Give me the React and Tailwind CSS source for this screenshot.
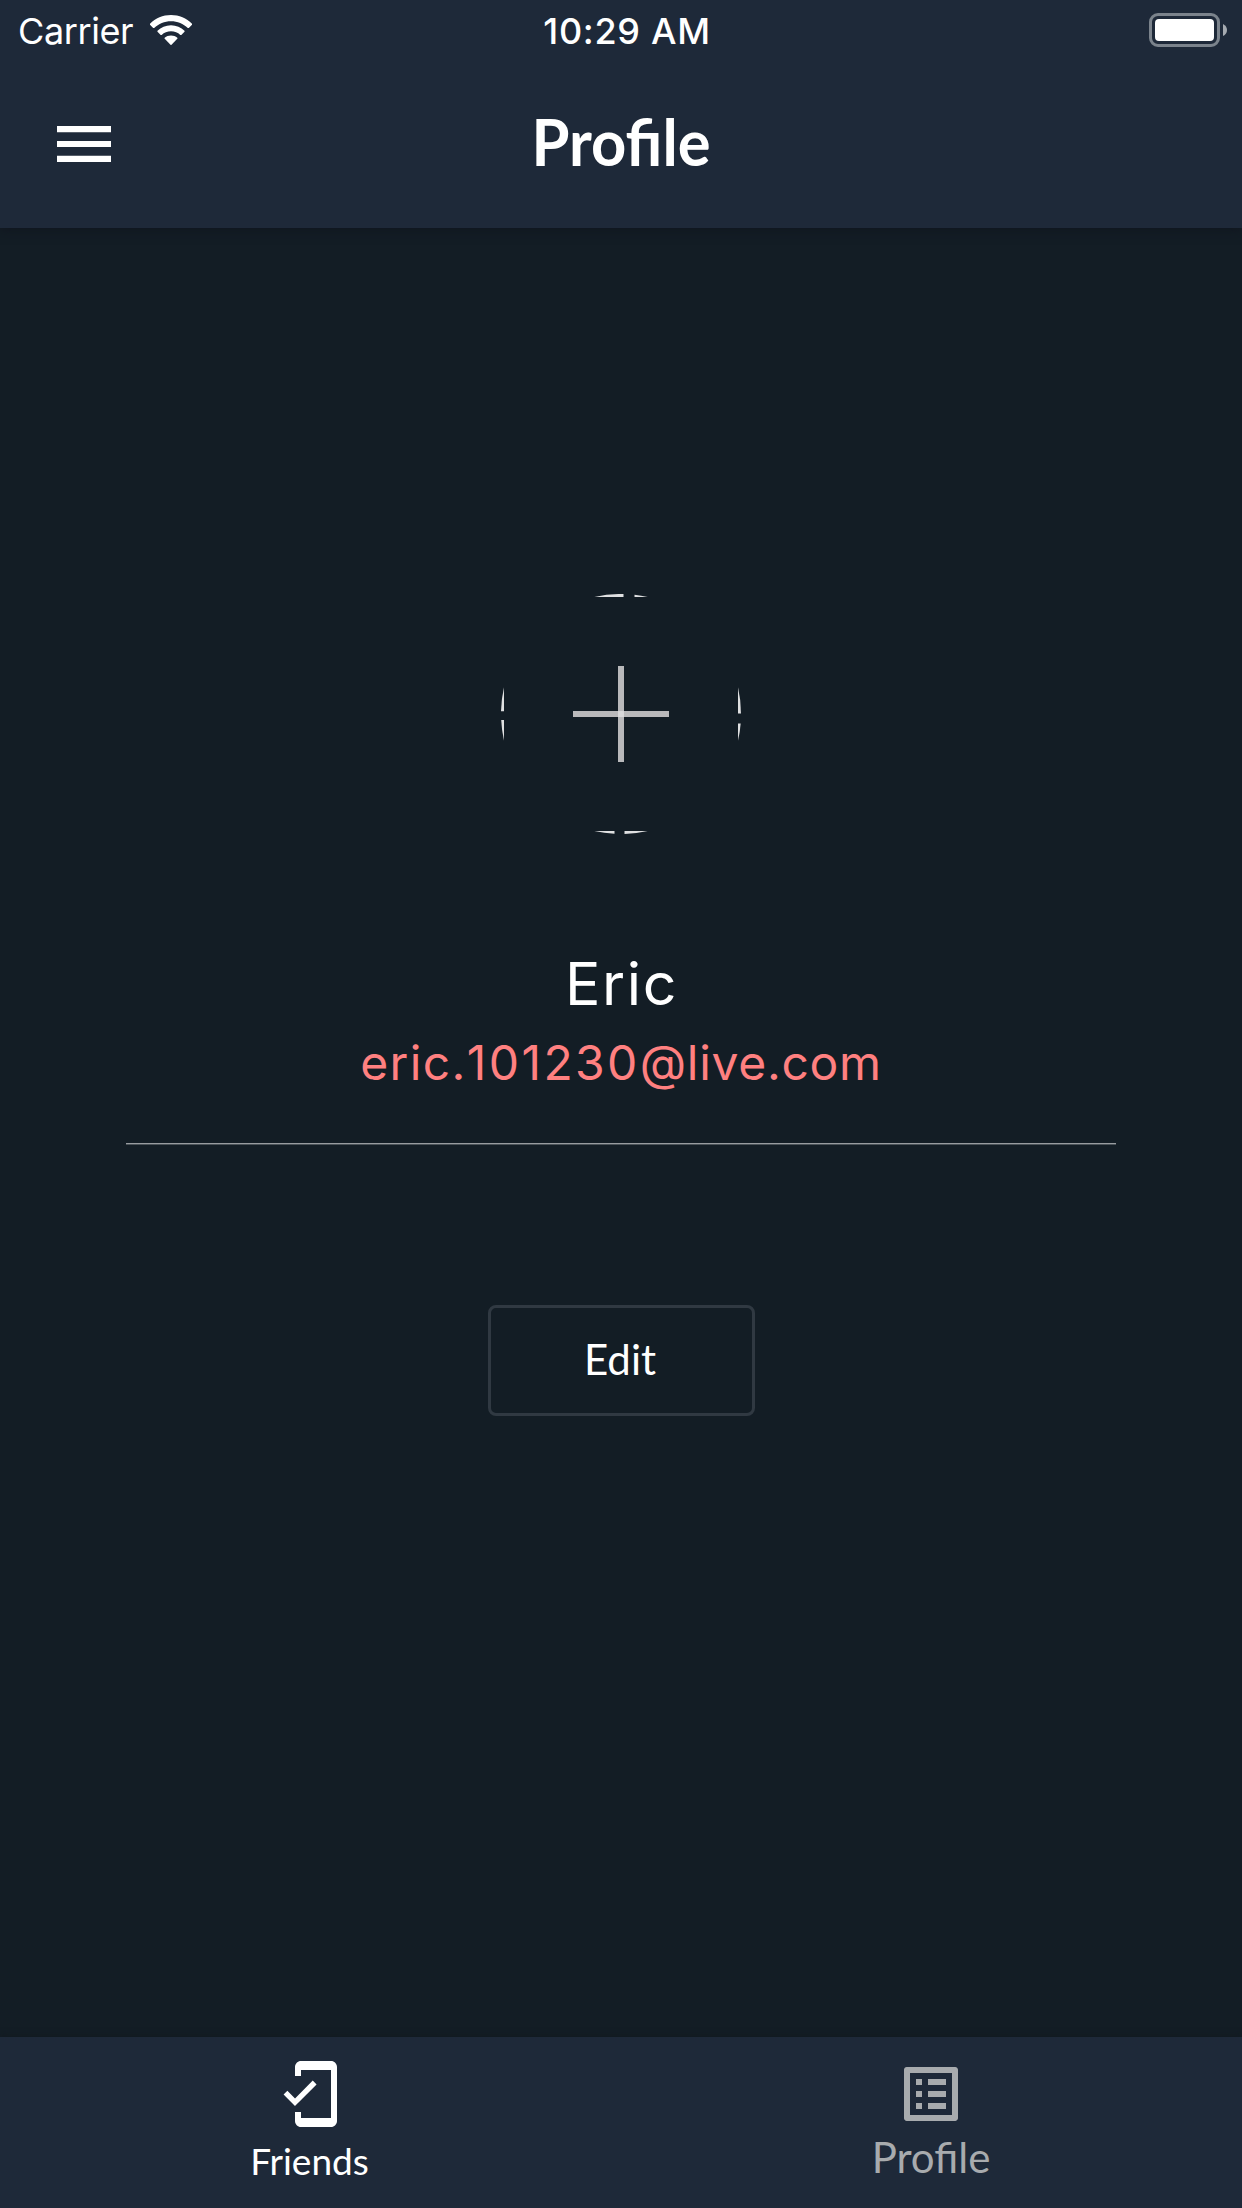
import React from "react";
import { MdMobileFriendly, MdListAlt } from "react-icons/md";

function Wifi() {
  return (
    <svg className="ml-[17px] mt-[15px] h-[30px] w-[42px]" viewBox="0 0 42 30" fill="#fff">
      <path d="M21 0C12.9 0 5.500 3.300 0 8.700Q-.3 9.200 0 9.700L3.200 12.900Q3.700 13.300 4.200 12.900C8.600 8.700 14.500 6.200 21 6.200S33.400 8.700 37.800 12.900Q38.300 13.300 38.800 12.900L42 9.700Q42.300 9.200 42 8.700C36.500 3.300 29.100 0 21 0Z" />
      <path d="M21 10.200C15.700 10.200 11 12.300 7.500 15.700Q7.200 16.200 7.500 16.700L10.700 19.900Q11.200 20.300 11.700 19.900C14.100 17.700 17.400 16.300 21 16.300S27.900 17.700 30.300 19.900Q30.800 20.300 31.300 19.900L34.500 16.700Q34.800 16.200 34.500 15.700C31 12.300 26.300 10.200 21 10.200Z" />
      <path d="M21 20.500C18.500 20.500 16.400 21.300 14.700 22.700Q14.300 23.200 14.700 23.700L20.500 29.700Q21 30.100 21.500 29.700L27.300 23.700Q27.700 23.200 27.300 22.700C25.600 21.300 23.500 20.500 21 20.500Z" />
    </svg>
  );
}

function StatusBar() {
  return (
    <div className="grid h-[60px] grid-cols-3 font-['Inter',sans-serif] text-[36px] leading-[62px] text-white">
      <div className="flex pl-[18px]">
        <span className="w-[115px] whitespace-nowrap tracking-[-0.4px]">Carrier</span>
        <Wifi />
      </div>
      <div className="whitespace-nowrap pl-[12px] text-center font-medium tracking-[0.7px]">10:29 AM</div>
      <div className="flex justify-end pr-[15px] pt-[13px]">
        <div className="h-[34px] w-[71px] rounded-[9px] border-[3px] border-[#7b838c] p-[3px]">
          <div className="h-full rounded-[4px] bg-white" />
        </div>
        <svg className="ml-[3px] mt-[11px] h-[12px] w-[4px]" viewBox="0 0 4 12" fill="#a5aab0">
          <path d="M0 0Q4 2 4 6T0 12Z" />
        </svg>
      </div>
    </div>
  );
}

function Header() {
  return (
    <header className="relative h-[228px] bg-[#1e2939] shadow-[0_2px_10px_rgba(16,18,28,0.7)]">
      <StatusBar />
      <div className="grid h-[168px] grid-cols-3">
        <button className="ml-[57px] mt-[66px] h-[36px] w-[54px]" aria-label="Menu">
          <svg className="block h-[36px] w-[54px]" viewBox="0 0 54 36" fill="#fff">
            <path d="M0 0H54V6.300H0ZM0 15H54V21H0ZM0 29.700H54V36H0Z" />
          </svg>
        </button>
        <h1 className="scale-x-[0.945] whitespace-nowrap pt-[31px] text-center font-['Lato',sans-serif] text-[65px] font-bold leading-[100px] text-white">
          Profile
        </h1>
      </div>
    </header>
  );
}

function Avatar() {
  return (
    <svg className="mt-[366px] h-[240px] w-[240px]" viewBox="0 0 240 240">
      <g fill="#dfe0e1">
        <path d="M93.300 3A120 120 0 0 1 122.500 0V3Z" />
        <path d="M133.500 .8A120 120 0 0 1 146.700 3H133.500Z" />
        <path d="M93.300 237A120 120 0 0 0 113.500 239.800V237Z" />
        <path d="M123.500 240A120 120 0 0 0 146.700 237H123.500Z" />
        <path d="M3 93.300A120 120 0 0 0 0 117.300H3Z" />
        <path d="M.2 126A120 120 0 0 0 3 146.700V126Z" />
        <path d="M237 93.300A120 120 0 0 1 240 119.500H237Z" />
        <path d="M239.700 129.500A120 120 0 0 1 237 146.700V129.500Z" />
      </g>
      <path d="M117 72H123V168H117Z" fill="#b9b9bb" />
      <path d="M72 117H168V123H72Z" fill="#b9b9bb" />
      <path d="M117 117H123V123H117Z" fill="#d8d8da" />
    </svg>
  );
}

export default function App() {
  return (
    <div className="flex h-[2208px] w-[1242px] flex-col overflow-hidden bg-[#131d25]">
      <Header />
      <main className="flex flex-1 flex-col items-center">
        <Avatar />
        <h2 className="mt-[110px] h-[80px] whitespace-nowrap pl-px font-['Inter',sans-serif] text-[59px] leading-[80px] tracking-[1.6px] text-white">
          Eric
        </h2>
        <p className="mt-[8px] h-[62px] whitespace-nowrap font-['Inter',sans-serif] text-[48px] leading-[62px] tracking-[1.4px] text-[#ff8080]">
          eric.<span className="tracking-[2.4px]">101230</span>
          <span className="tracking-[0.7px]">@live.com</span>
        </p>
        <div className="mt-[49px] h-[2px] w-[990px] border-t border-[#989ca0] bg-[#4b5359]" />
        <button className="mt-[160px] h-[111px] w-[267px] rounded-[8px] border-[3px] border-[#303942] pr-[2px] font-['Lato',sans-serif] text-[42px] leading-[103px] text-white">
          <span className="block h-[105px]">Edit</span>
        </button>
      </main>
      <nav className="grid h-[171px] grid-cols-2 bg-[#1e2939] font-['Lato',sans-serif] shadow-[0_-1px_6px_rgba(16,24,28,0.6)]">
        <a className="flex flex-col items-center pr-[2px] pt-[21px] text-white">
          <MdMobileFriendly className="ml-px h-[72px] w-[72px]" />
          <span className="h-[60px] text-[37px] leading-[61px]">Friends</span>
        </a>
        <a className="flex flex-col items-center pr-px pt-[21px] text-[#a8abae]">
          <MdListAlt className="h-[72px] w-[72px]" />
          <span className="h-[60px] text-[42px] leading-[54px]">Profile</span>
        </a>
      </nav>
    </div>
  );
}
